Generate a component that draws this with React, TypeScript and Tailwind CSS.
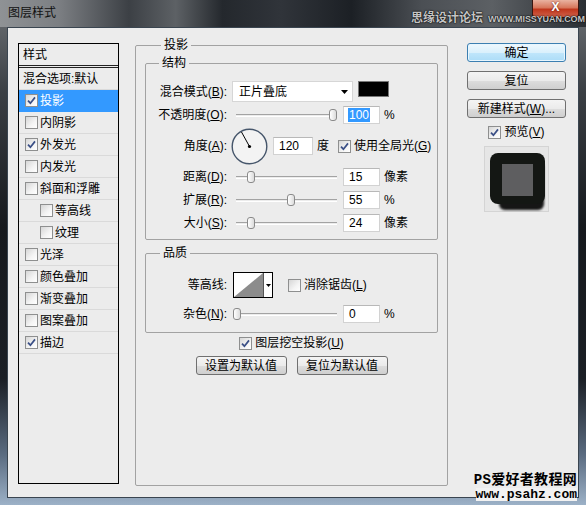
import React from 'react';

type Row = { t: string; c?: boolean; sel?: boolean; sub?: boolean };

const styleRows: Row[] = [
  { t: '投影', c: true, sel: true },
  { t: '内阴影' },
  { t: '外发光', c: true },
  { t: '内发光' },
  { t: '斜面和浮雕' },
  { t: '等高线', sub: true },
  { t: '纹理', sub: true },
  { t: '光泽' },
  { t: '颜色叠加' },
  { t: '渐变叠加' },
  { t: '图案叠加' },
  { t: '描边', c: true },
];

function Check({ checked }: { checked?: boolean }) {
  return (
    <span className="inline-flex w-[13px] h-[13px] shrink-0 items-center justify-center border border-[#8e8f8f] bg-[linear-gradient(135deg,#d6d6d6_0%,#f4f4f4_60%,#ffffff_100%)]">
      {checked && (
        <svg viewBox="0 0 9 9" className="w-[9px] h-[9px]">
          <path d="M1 4.6 L3.4 7.2 L8 1.4" stroke="#3a4f86" strokeWidth="1.7" fill="none" />
        </svg>
      )}
    </span>
  );
}

function Slider({ pos }: { pos: number }) {
  return (
    <div className="relative w-[101px] h-[14px] ml-[9px]">
      <div className="absolute left-0 right-0 top-[6px] h-[3px] border-t border-[#a3a3a3] border-b border-b-white" />
      <div
        className="absolute top-[1px] w-[8px] h-[12px] rounded-[3px] border border-[#8a8a8a] bg-[linear-gradient(90deg,#ffffff,#dcdcdc)]"
        style={{ left: pos }}
      />
    </div>
  );
}

function Field({ v, w = 'w-[37px]', sel }: { v: string; w?: string; sel?: boolean }) {
  return (
    <div className={`${w} h-[18px] bg-white border border-[#d2d2d2] border-t-[#b8b8b8] flex items-center pl-[4px] text-[12px]`}>
      {sel ? <span className="bg-[#3399ff] text-white px-[1px] leading-[14px]">{v}</span> : <span className="pl-[1px]">{v}</span>}
    </div>
  );
}

function Label({ children }: { children: React.ReactNode }) {
  return <div className="w-[81px] text-right whitespace-nowrap">{children}</div>;
}

function Btn({ children, primary, w = 'w-[99px]' }: { children: React.ReactNode; primary?: boolean; w?: string }) {
  return (
    <div
      className={`${w} h-[19px] rounded-[3px] border flex items-center justify-center text-[12px] leading-[14px] whitespace-nowrap ${
        primary
          ? 'border-[#3c7fb1] bg-[linear-gradient(180deg,#eef8fe_0%,#daf0fc_50%,#c0e6fb_51%,#acdcf7_100%)] shadow-[inset_0_0_0_1px_#e8f6fe]'
          : 'border-[#707070] bg-[linear-gradient(180deg,#f4f4f4_0%,#ebebeb_50%,#dddddd_51%,#cfcfcf_100%)]'
      }`}
    >
      {children}
    </div>
  );
}

function Unit({ children }: { children: React.ReactNode }) {
  return <span className="ml-[4px]">{children}</span>;
}

export default function App() {
  return (
    <div className="relative w-[586px] h-[505px] overflow-hidden text-[12px] leading-[14px] text-black font-['Liberation_Sans','Noto_Sans_CJK_SC',sans-serif] bg-[linear-gradient(180deg,#6f7377_0%,#3b3f44_18%,#16191d_45%,#1b1f25_75%,#5a6b80_90%,#9cb1c7_100%)]">
      {/* title bar */}
      <div className="h-[27px] flex items-start bg-[linear-gradient(90deg,#8f9295_0%,#7c7f83_10%,#3c4045_22%,#5d6165_30%,#24282d_38%,#30343a_48%,#1c2025_60%,#4b4f54_72%,#5c6064_84%,#2a2e33_100%)]">
        <div className="ml-[8px] mt-[6px] text-[12px] text-[#111]">图层样式</div>
        <div className="ml-auto mr-[7px] w-[47px] h-[18px] rounded-b-[4px] border border-t-0 border-[#3a1610] bg-[linear-gradient(180deg,#e9b2a0_0%,#d7775c_45%,#c0371d_55%,#d0614a_100%)] flex items-start justify-center">
          <span className="mt-[1px] text-white font-bold text-[12px] leading-[12px] [text-shadow:0_0_2px_#5a0d00]">X</span>
        </div>
      </div>
      <div className="absolute left-[411px] top-[12px] flex items-end gap-[5px] font-bold text-[#c4c4c4] [text-shadow:0_0_2px_#000,0_0_1px_#000]">
        <span className="text-[12px] leading-[12px]">思缘设计论坛</span>
        <span className="text-[9px] leading-[9px] tracking-[-0.1px]">WWW.MISSYUAN.COM</span>
      </div>

      {/* client area */}
      <div className="mx-[7px] h-[471px] bg-[#ececec] border border-[#3a4550] flex items-start">
        {/* style list */}
        <div className="ml-[10px] mt-[15px] w-[101px] h-[441px] border border-black">
          <div className="h-[24px] flex items-center pl-[4px] border-b-[3px] border-double border-[#222]">样式</div>
          <div className="h-[22px] flex items-center pl-[4px] border-b border-[#dadada]">混合选项:默认</div>
          {styleRows.map((r) => (
            <div
              key={r.t}
              className={`h-[22px] flex items-center gap-[2px] border-b ${r.sub ? 'pl-[21px]' : 'pl-[6px]'} ${
                r.sel ? 'bg-[#3399ff] text-white border-[#3399ff]' : 'border-[#dadada]'
              }`}
            >
              <Check checked={r.c} />
              <span>{r.t}</span>
            </div>
          ))}
        </div>

        {/* drop shadow settings */}
        <fieldset className="ml-[16px] mt-[10px] w-[313px] h-[448px] px-[9px] border border-[#a2a2a2] rounded-[2px]">
          <legend className="ml-[16px] px-[3px] leading-[14px]">投影</legend>

          <fieldset className="mt-[4px] pt-[11px] pb-[5px] border border-[#a2a2a2] rounded-[2px]">
            <legend className="ml-[13px] px-[3px] leading-[14px]">结构</legend>
            <div className="h-[22px] flex items-start">
              <div className="h-[21px] flex items-center">
                <Label>
                  混合模式(<u>B</u>):
                </Label>
              </div>
              <div className="ml-[5px] w-[121px] h-[21px] bg-white border border-[#d6d6d6] flex items-center pl-[6px]">
                <span>正片叠底</span>
                <svg viewBox="0 0 7 4" className="ml-auto mr-[4px] w-[7px] h-[4px]">
                  <path d="M0 0 H7 L3.5 4 Z" fill="#000" />
                </svg>
              </div>
              <div className="ml-[5px] w-[31px] h-[16px] bg-black border border-[#777]" />
            </div>
            <div className="h-[24px] flex items-center">
              <Label>
                不透明度(<u>O</u>):
              </Label>
              <Slider pos={93} />
              <div className="ml-[6px]">
                <Field v="100" sel />
              </div>
              <Unit>%</Unit>
            </div>
            <div className="h-[38px] flex items-center">
              <Label>
                角度(<u>A</u>):
              </Label>
              <svg width="37" height="37" viewBox="0 0 37 37" className="ml-[4px]">
                <circle cx="18.5" cy="18.5" r="17.3" fill="#f3f3f3" stroke="#46566b" strokeWidth="1.4" />
                <line x1="18.5" y1="18.5" x2="10.5" y2="4" stroke="#000" strokeWidth="1" />
                <circle cx="18.5" cy="18.5" r="1.6" fill="#000" />
              </svg>
              <div className="ml-[5px]">
                <Field v="120" w="w-[40px]" />
              </div>
              <span className="ml-[4px]">度</span>
              <div className="ml-[9px] flex items-center gap-[3px]">
                <Check checked />
                <span>
                  使用全局光(<u>G</u>)
                </span>
              </div>
            </div>
            {[
              { l: '距离', k: 'D', p: 11, v: '15', u: '像素' },
              { l: '扩展', k: 'R', p: 51, v: '55', u: '%' },
              { l: '大小', k: 'S', p: 11, v: '24', u: '像素' },
            ].map((r) => (
              <div key={r.l} className="h-[23px] flex items-center">
                <Label>
                  {r.l}(<u>{r.k}</u>):
                </Label>
                <Slider pos={r.p} />
                <div className="ml-[6px]">
                  <Field v={r.v} />
                </div>
                <Unit>{r.u}</Unit>
              </div>
            ))}
          </fieldset>

          <fieldset className="mt-[6px] pt-[11px] pb-[6px] border border-[#a2a2a2] rounded-[2px]">
            <legend className="ml-[14px] px-[3px] leading-[14px]">品质</legend>
            <div className="h-[28px] flex items-center">
              <Label>等高线:</Label>
              <div className="ml-[6px] w-[40px] h-[26px] border border-black bg-white flex">
                <svg viewBox="0 0 29 24" className="w-[29px] h-[24px]">
                  <path d="M0 24 L29 0 V24 Z" fill="#8c8c8c" />
                </svg>
                <div className="flex-1 border-l border-[#555] flex items-center justify-center">
                  <svg viewBox="0 0 5 3" className="w-[5px] h-[3px]">
                    <path d="M0 0 H5 L2.5 3 Z" fill="#000" />
                  </svg>
                </div>
              </div>
              <div className="ml-[15px] flex items-center gap-[3px]">
                <Check />
                <span>
                  消除锯齿(<u>L</u>)
                </span>
              </div>
            </div>
            <div className="mt-[3px] h-[24px] flex items-center">
              <Label>
                杂色(<u>N</u>):
              </Label>
              <Slider pos={-3} />
              <div className="ml-[6px]">
                <Field v="0" />
              </div>
              <Unit>%</Unit>
            </div>
          </fieldset>

          <div className="mt-[3px] h-[14px] flex items-center justify-center gap-[3px]">
            <Check checked />
            <span>
              图层挖空投影(<u>U</u>)
            </span>
          </div>
          <div className="mt-[6px] flex justify-center gap-[10px]">
            <Btn w="w-[91px]">设置为默认值</Btn>
            <Btn w="w-[91px]">复位为默认值</Btn>
          </div>
        </fieldset>

        {/* buttons + preview */}
        <div className="ml-[19px] mt-[15px] w-[99px] flex flex-col items-center">
          <Btn primary>确定</Btn>
          <div className="mt-[9px]">
            <Btn>复位</Btn>
          </div>
          <div className="mt-[9px]">
            <Btn>
              新建样式(<u>W</u>)...
            </Btn>
          </div>
          <div className="mt-[7px] h-[14px] flex items-center gap-[3px]">
            <Check checked />
            <span>
              预览(<u>V</u>)
            </span>
          </div>
          <div className="mt-[7px] w-[65px] h-[66px] bg-[#e6e6e6] border border-[#d4d4d4]">
            <svg viewBox="0 0 65 66" className="w-[65px] h-[66px]">
              <defs>
                <filter id="sh" x="-30%" y="-30%" width="160%" height="160%">
                  <feGaussianBlur stdDeviation="1.2" />
                </filter>
              </defs>
              <rect x="14" y="14" width="45" height="49" rx="6" fill="#000" opacity="0.9" filter="url(#sh)" />
              <rect x="5" y="6" width="55" height="51" rx="8" fill="#141714" />
              <rect x="17" y="17" width="31" height="32" fill="#5e5e60" />
            </svg>
          </div>
        </div>
      </div>

      {/* site watermark */}
      <div className="absolute right-[9px] bottom-[4px] flex flex-col items-end font-bold">
        <span className="text-[14px] leading-[15px] tracking-[0.3px] font-['Liberation_Mono','Noto_Sans_CJK_SC',monospace]">PS爱好者教程网</span>
        <span className="bg-[#f2f2f2] text-[13px] leading-[13px] font-['Liberation_Mono',monospace]">www.psahz.com</span>
      </div>
    </div>
  );
}
